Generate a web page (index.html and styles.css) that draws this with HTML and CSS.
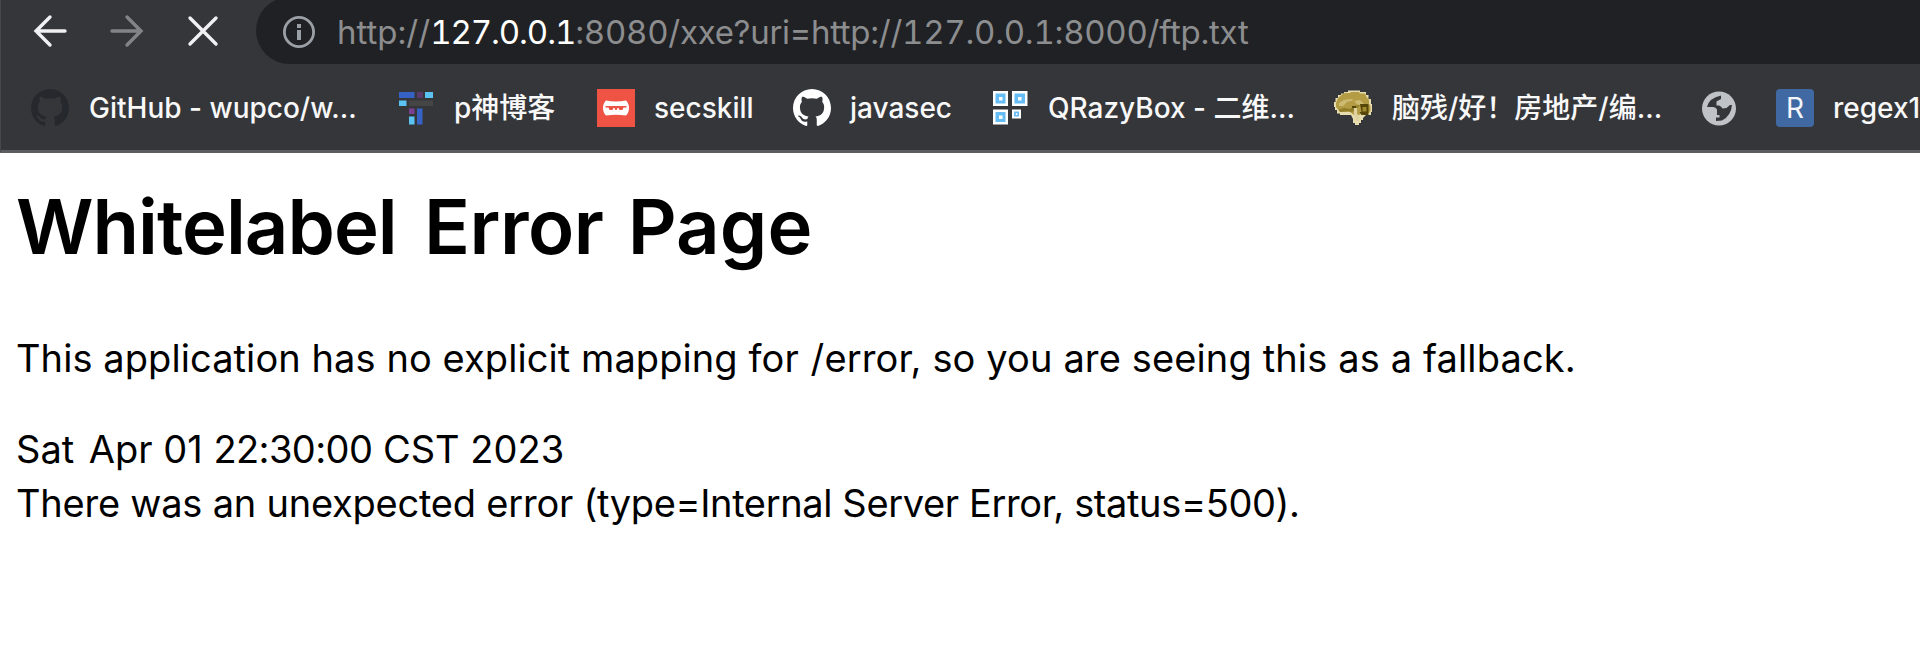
FILE: index.html
```
<!DOCTYPE html>
<html lang="en">
<head>
<meta charset="utf-8">
<title>Whitelabel Error Page</title>
<link rel="stylesheet" href="styles.css">
</head>
<body>
<svg width="0" height="0" class="defs">
  <symbol id="octocat" viewBox="0 0 16 16"><path d="M8 0C3.58 0 0 3.58 0 8c0 3.54 2.29 6.53 5.47 7.59.4.07.55-.17.55-.38 0-.19-.01-.82-.01-1.49-2.01.37-2.53-.49-2.69-.94-.09-.23-.48-.94-.82-1.13-.28-.15-.68-.52-.01-.53.63-.01 1.08.58 1.23.82.72 1.21 1.87.87 2.33.66.07-.52.28-.87.51-1.07-1.78-.2-3.64-.89-3.64-3.95 0-.87.31-1.59.82-2.15-.08-.2-.36-1.02.08-2.12 0 0 .67-.21 2.2.82.64-.18 1.32-.27 2-.27s1.36.09 2 .27c1.53-1.04 2.2-.82 2.2-.82.44 1.1.16 1.92.08 2.12.51.56.82 1.27.82 2.15 0 3.07-1.87 3.75-3.65 3.95.29.25.54.73.54 1.48 0 1.07-.01 1.93-.01 2.2 0 .21.15.46.55.38A8.01 8.01 0 0 0 16 8c0-4.42-3.58-8-8-8z"/></symbol>
</svg>
<header class="chrome">
  <div class="toolbar">
    <div class="nav">
      <svg class="btn" viewBox="0 0 36 36"><path d="M33 18H4M18 4L4 18l14 14"/></svg>
      <svg class="btn dim" viewBox="0 0 36 36"><path d="M3 18h29M18 4l14 14-14 14"/></svg>
      <svg class="btn" viewBox="0 0 36 36"><path d="M4 5l26 26M30 5L4 31"/></svg>
    </div>
    <div class="omnibox">
      <svg class="info" viewBox="0 0 34 34"><circle cx="17" cy="17" r="14.6"/><path d="M15 15h4v10h-4zM15 9h4v4h-4z"/></svg>
      <span class="url"><span class="scheme">http://</span><span class="host">127.0.0.1</span><span class="path">:8080/xxe?uri=http://127.0.0.1:8000/ftp.txt</span></span>
    </div>
  </div>
  <nav class="bookmarks">
    <a class="mark wider"><svg class="ico dark"><use href="#octocat"/></svg><span>GitHub - wupco/w...</span></a>
    <a class="mark"><svg class="ico" viewBox="0 0 38 38"><path fill="#3562c4" d="M2 3h15.500v6H2zM20 19.500h5.500v16H20z"/><path fill="#5b3a6b" d="M20 3h6v6h-6z"/><path fill="#7b3f94" d="M12 19.500h5.500V25H12z"/><path fill="#5bc3f2" d="M28 3h8v6h-8zM2 11.500h7.500V17H2zM12 27.500h5.500v8H12z"/><path fill="#454545" d="M12 11.500h24V17H12z"/></svg><span>p神博客</span></a>
    <a class="mark"><svg class="ico" viewBox="0 0 38 38"><path fill="#ee5344" d="M0 0h38v38H0z"/><path fill="#fff" d="M9 11.500q10 2 20 0 3 3 3 7.500t-3 7.500q-10-1.500-20 0-3-3-3-7.500t3-7.500z"/><path fill="#ee5344" d="M8.500 17h21v1.500h-3l-1 2.500h-3l-1-2h-1l-.8 2h-1.400l-.8-2h-1l-1 2h-3l-1-2.500h-3z"/></svg><span>secskill</span></a>
    <a class="mark"><svg class="ico light"><use href="#octocat"/></svg><span>javasec</span></a>
    <a class="mark"><svg class="ico" viewBox="0 0 38 38"><path fill="#fff" d="M2 2h15v15H2zM21 2h15.500v15H21zM2 20.500h15v15H2zM21 20.500h9v9h-9z"/><path fill="#66bdf5" d="M4.500 4.500h10v10h-10zM23.500 4.500h10.500v10H23.500zM4.500 23h10v10h-10zM23 22.500h5v5h-5z"/><path fill="#fff" d="M8 8h3.500v3.500H8zM27 8h3.500v3.500H27zM8 26.500h3.500V30H8zM24.800 24.300h1.600v1.600h-1.600z"/></svg><span>QRazyBox - 二维...</span></a>
    <a class="mark wider"><svg class="ico" viewBox="0 0 38 38"><path fill="#e6dcae" d="M10 3h4V1.500h12V3h6v3h2.500v4H37v5h1.500v8H37v3h-5l-3 3v2h-2v3h-2v2h-4v-2h-2v-4l-2-4H6v-1.500H3V21H1v-3H0v-5h1.500V9H4V6h3V4.500h3z"/><path fill="#b39c43" d="M11 4h5l1-1h8l1 1.500h5L32.500 8 35 11v4l1.500 2v5L35 24h-6l-4 2h-5l-4-3H6l-4-5v-4l2-5 4-3.500z"/><path fill="#cdbb73" d="M5 14l5-3 7-1 3 1-7 2-4 4H5zM20 12l6-1 4 4-6 1z"/><path fill="#907c29" d="M5 20l6-1 5 1 4-3 6-1-4 4-4 3-4-1-8 1z"/><path fill="#564709" d="M26 15h8.500v11h-7l-2-3h2zM18 17h4v2h-4z"/><path fill="#a18b30" d="M28.500 18h4v4.500h-4z"/><path fill="#ded3a1" d="M20 19h3v6l3 2-1 5h-3l-2-7z"/></svg><span>脑残/好！房地产/编...</span></a>
    <a class="mark"><svg class="ico" viewBox="0 0 38 38"><circle cx="19" cy="19.500" r="17" fill="#bfc2c7"/><path fill="#35363a" d="M7 18q2-9 14-11.500v3.500l-4.500 2.500v4H19q2.500 1 3.500 3l4-.5 3.500-3h2q-1 11-10 15.500l-6 .5v-3.500h3.500V26H17v-5.500q-1-2.500-4-2.500z"/></svg></a>
    <a class="mark"><b class="ico tile">R</b><span>regex1</span></a>
  </nav>
</header>
<main class="page">
  <h1><span class="w1">Whitelabel</span> <span class="w2">Error</span> Page</h1>
  <p class="lead">This application has no explicit mapping for <span class="wide">/error, so you are seeing this as a fallback.</span></p>
  <div class="line"><span class="day">Sat</span> Apr 01 <span class="time">22:30:00</span> CST 2023</div>
  <div class="line snug">There was an unexpected error <span class="tight">(type=Internal Server Error, status=500).</span></div>
</main>
</body>
</html>
```
FILE: styles.css
```
* { box-sizing: border-box; }
body { margin: 0; background: #fff; color: #000; font-family: Inter, "Noto Sans CJK SC", sans-serif; overflow: hidden; }
.defs { display: block; }
.chrome { height: 153px; background: #35363a; border-bottom: 3px solid #5c5c61; border-left: 1px solid #47484c; overflow: hidden; }
.toolbar { display: flex; height: 64px; overflow: hidden; }
.nav { display: flex; gap: 41px; width: 255px; padding: 13px 0 0 31px; }
.btn { width: 36px; height: 36px; flex: none; fill: none; stroke: #f1f1f3; stroke-width: 3.4; stroke-linecap: round; }
.dim { stroke: #838487; }
.omnibox { flex: 1; display: flex; align-items: center; height: 67px; margin-top: -3px; padding: 2px 0 0 26px; background: #202124; border-radius: 34px 0 0 34px; }
.info { width: 34px; height: 34px; flex: none; fill: #9aa0a6; }
.info circle { fill: none; stroke: #9aa0a6; stroke-width: 2.8; }
.url { margin-left: 21px; font-size: 33px; line-height: 40px; color: #8c8d8f; white-space: nowrap; font-variant-numeric: tabular-nums; }
.host { color: #fff; letter-spacing: -1.1px; }
.path { letter-spacing: -0.28px; }
.bookmarks { display: grid; grid-template-columns: 366px 200px 196px 198px 343px 366px 76px auto; padding-left: 30px; height: 87px; align-items: center; }
.mark { display: flex; align-items: center; gap: 19px; height: 40px; color: #f8f8f8; font-size: 28px; font-weight: 500; line-height: 40px; white-space: nowrap; }
.wider { gap: 20px; }
.ico { width: 38px; height: 38px; flex: none; }
.dark { fill: #25292e; }
.light { fill: #fff; }
.tile { background: #4069a3; border-radius: 4px; color: #f4f6fa; font-size: 28px; font-weight: 400; line-height: 38px; text-align: center; }
.page { padding: 27px 16px 0; }
h1 { margin: 0; font-size: 76px; font-weight: 600; line-height: 92px; letter-spacing: 0.1px; white-space: nowrap; }
.w1 { letter-spacing: -1px; margin-right: 8px; }
.w2 { letter-spacing: -0.5px; margin-right: 5px; }
.lead { margin: 59px 0 0; }
.lead, .line { font-size: 38px; line-height: 54px; white-space: nowrap; }
.lead { letter-spacing: 0.08px; }
.wide { margin-left: 1px; letter-spacing: 0.13px; }
.line:nth-of-type(1) { margin-top: 37px; }
.day { margin-right: 4px; }
.time { letter-spacing: -0.6px; }
.snug { letter-spacing: -0.22px; }
.tight { letter-spacing: -0.37px; }
```
